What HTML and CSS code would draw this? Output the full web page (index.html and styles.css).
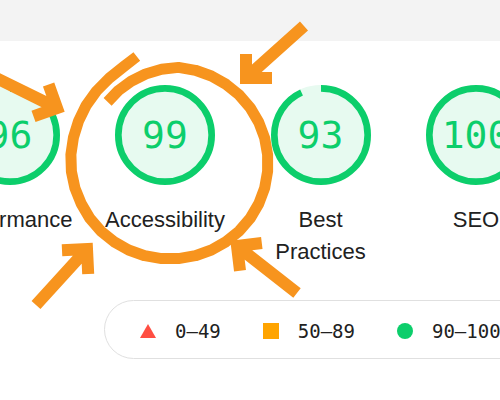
FILE: index.html
```html
<!DOCTYPE html>
<html lang="en">
<head>
  <meta charset="UTF-8" />
  <title>Lighthouse Scores</title>
  <meta name="viewport" content="width=device-width, initial-scale=1" />
  <link rel="stylesheet" href="styles.css">
</head>
<body>
  <div class="topbar"></div>

  <main class="report">
    <div class="gauges">
      <div class="gauge-item">
        <div class="gauge">
          <svg viewBox="0 0 120 120">
            <circle class="gauge-base" cx="60" cy="60" r="56" />
            <circle class="gauge-arc" cx="60" cy="60" r="56" stroke-dasharray="337.8 351.9" transform="rotate(-90 60 60)" />
          </svg>
          <span class="gauge-value">96</span>
        </div>
        <div class="gauge-label">Performance</div>
      </div>

      <div class="gauge-item">
        <div class="gauge">
          <svg viewBox="0 0 120 120">
            <circle class="gauge-base" cx="60" cy="60" r="56" />
            <circle class="gauge-arc" cx="60" cy="60" r="56" stroke-dasharray="351.9 351.9" transform="rotate(-90 60 60)" />
          </svg>
          <span class="gauge-value">99</span>
        </div>
        <div class="gauge-label">Accessibility</div>
      </div>

      <div class="gauge-item">
        <div class="gauge">
          <svg viewBox="0 0 120 120">
            <circle class="gauge-base" cx="60" cy="60" r="56" />
            <circle class="gauge-arc" cx="60" cy="60" r="56" stroke-dasharray="327.2 351.9" transform="rotate(-90 60 60)" />
          </svg>
          <span class="gauge-value">93</span>
        </div>
        <div class="gauge-label">Best Practices</div>
      </div>

      <div class="gauge-item">
        <div class="gauge">
          <svg viewBox="0 0 120 120">
            <circle class="gauge-base" cx="60" cy="60" r="56" />
            <circle class="gauge-arc" cx="60" cy="60" r="56" stroke-dasharray="351.9 351.9" transform="rotate(-90 60 60)" />
          </svg>
          <span class="gauge-value">100</span>
        </div>
        <div class="gauge-label">SEO</div>
      </div>
    </div>

    <div class="legend">
      <span class="legend-item"><span class="icon icon-fail"></span>0–49</span>
      <span class="legend-item"><span class="icon icon-average"></span>50–89</span>
      <span class="legend-item"><span class="icon icon-pass"></span>90–100</span>
    </div>
  </main>

  <!-- hand drawn markup on top of the screenshot -->
  <svg class="annotations" viewBox="0 0 500 400">
    <path class="scribble" d="M107.6 101.9 L118.3 90.6 L131.1 81.2 L145.6 74.0 L161.6 69.3 L178.5 67.4 L195.4 70.3 L211.4 76.0 L226.2 84.4 L239.3 95.1 L250.3 107.9 L258.8 122.4 L264.7 138.2 L267.6 154.6 L267.6 171.4 L264.7 187.8 L258.8 203.6 L250.3 218.1 L239.3 230.9 L226.2 241.6 L211.4 250.0 L195.4 255.7 L178.5 258.6 L161.5 258.6 L144.6 255.7 L128.6 250.0 L113.8 241.6 L100.7 230.9 L89.7 218.1 L81.2 203.6 L74.9 188.0 L71.4 171.5 L70.9 154.5 L73.4 137.7 L78.5 121.2 L86.1 105.5 L96.5 91.0 L109.3 78.1 L124.0 66.4 L136.8 56.5" />
    <path class="arrow" d="M304 26 L246 78 M246 54 L246 78 L272 78" />
    <path class="arrow" d="M-20 70 L57 108 M48.6 84.5 L57 108 L33.5 116.4" />
    <path class="arrow" d="M36 305 L87 249 M62 250.2 L87 249 L88.2 274" />
    <path class="arrow" d="M297 293 L237 246 M240 270.8 L237 246 L261.8 243" />
  </svg>
</body>
</html>
```

FILE: styles.css
```css
body {
  margin: 0;
  width: 500px;
  height: 400px;
  overflow: hidden;
  position: relative;
  background: #fff;
  font-family: "Liberation Sans", Arial, sans-serif;
  color: #212121;
}
.topbar {
  height: 41px;
  background: #f3f3f3;
}
.gauges {
  display: flex;
  width: max-content;
  margin-left: -68.25px;
  padding-top: 44px;
}
.gauge-item {
  flex: none;
  width: 155.5px;
  display: flex;
  flex-direction: column;
  align-items: center;
}
.gauge {
  display: grid;
  width: 100px;
  height: 100px;
}
.gauge > * {
  grid-area: 1 / 1;
}
.gauge svg {
  width: 100px;
  height: 100px;
}
.gauge-base {
  fill: #e7faf0;
  stroke: #e7faf0;
  stroke-width: 8;
}
.gauge-arc {
  fill: none;
  stroke: #0cce6b;
  stroke-width: 8;
}
.gauge-value {
  place-self: center;
  font-family: "DejaVu Sans Mono", monospace;
  font-size: 38px;
  line-height: 1;
  color: #0cce6b;
}
.gauge-label {
  width: 130px;
  margin-top: 19px;
  text-align: center;
  font-size: 22px;
  line-height: 32px;
}
.legend {
  display: inline-flex;
  align-items: center;
  gap: 42px;
  height: 59px;
  box-sizing: border-box;
  margin: 32px 0 0 103.5px;
  padding: 2px 36px 0 35.5px;
  border: 1px solid #e0e0e0;
  border-radius: 30px;
  white-space: nowrap;
  font-family: "DejaVu Sans Mono", monospace;
  font-size: 19px;
}
.legend-item {
  display: flex;
  align-items: center;
  gap: 19px;
}
.icon {
  flex: none;
}
.icon-fail {
  width: 0;
  height: 0;
  border-left: 8px solid transparent;
  border-right: 8px solid transparent;
  border-bottom: 14px solid #ff4e42;
}
.icon-average {
  width: 16px;
  height: 16px;
  background: #ffa400;
}
.icon-pass {
  width: 16px;
  height: 16px;
  border-radius: 50%;
  background: #0cce6b;
}
.annotations {
  position: absolute;
  top: 0;
  left: 0;
  width: 500px;
  height: 400px;
  pointer-events: none;
  fill: none;
  stroke: #f7941e;
}
.scribble {
  stroke-width: 11;
  stroke-linejoin: round;
}
.arrow {
  stroke-width: 12;
  stroke-linejoin: miter;
}
```
